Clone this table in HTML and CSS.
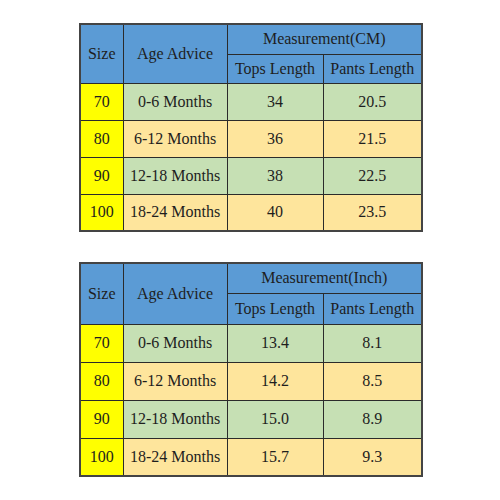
FILE: index.html
```html
<!DOCTYPE html>
<html>
<head>
<meta charset="utf-8">
<link rel="stylesheet" href="styles.css">
</head>
<body>
<div class="page">
  <table class="chart chart-cm">
    <colgroup><col class="c-size"><col class="c-age"><col class="c-tops"><col class="c-pants"></colgroup>
    <tr class="h1"><th rowspan="2">Size</th><th rowspan="2">Age Advice</th><th colspan="2">Measurement(CM)</th></tr>
    <tr class="h2"><th>Tops Length</th><th>Pants Length</th></tr>
    <tr class="green"><td class="size">70</td><td>0-6 Months</td><td>34</td><td>20.5</td></tr>
    <tr class="orange"><td class="size">80</td><td>6-12 Months</td><td>36</td><td>21.5</td></tr>
    <tr class="green"><td class="size">90</td><td>12-18 Months</td><td>38</td><td>22.5</td></tr>
    <tr class="orange"><td class="size">100</td><td>18-24 Months</td><td>40</td><td>23.5</td></tr>
  </table>
  <table class="chart chart-inch">
    <colgroup><col class="c-size"><col class="c-age"><col class="c-tops"><col class="c-pants"></colgroup>
    <tr class="h1"><th rowspan="2">Size</th><th rowspan="2">Age Advice</th><th colspan="2">Measurement(Inch)</th></tr>
    <tr class="h2"><th>Tops Length</th><th>Pants Length</th></tr>
    <tr class="green"><td class="size">70</td><td>0-6 Months</td><td>13.4</td><td>8.1</td></tr>
    <tr class="orange"><td class="size">80</td><td>6-12 Months</td><td>14.2</td><td>8.5</td></tr>
    <tr class="green"><td class="size">90</td><td>12-18 Months</td><td>15.0</td><td>8.9</td></tr>
    <tr class="orange"><td class="size">100</td><td>18-24 Months</td><td>15.7</td><td>9.3</td></tr>
  </table>
</div>
</body>
</html>
```
FILE: styles.css
```css
html, body { margin: 0; padding: 0; background: #ffffff; }
.page {
  width: 500px;
  height: 500px;
  padding: 23px 0 0 79px;
  box-sizing: border-box;
  display: flex;
  flex-direction: column;
  gap: 30px;
  font-family: "Liberation Serif", "Times New Roman", serif;
}
.chart {
  border-collapse: collapse;
  table-layout: fixed;
  width: 342px;
  font-family: "Liberation Serif", "Times New Roman", serif;
  font-size: 16px;
  color: #1e1e1e;
  border: 2px solid #444444;
}
.c-size { width: 43px; }
.c-age { width: 104px; }
.c-tops { width: 96px; }
.c-pants { width: 99px; }
.chart th, .chart td {
  border: 1px solid #2b2b2b;
  text-align: center;
  vertical-align: middle;
  padding: 0;
  font-weight: normal;
  white-space: nowrap;
}
.chart th { background: #5b9bd5; }
.h1 { height: 30px; }
.h2 { height: 29px; }
.chart tr.green, .chart tr.orange { height: 37px; }
.chart-inch tr.green, .chart-inch tr.orange { height: 38px; }
.chart-inch .h2 { height: 31px; }
.green td { background: #c6e0b4; }
.orange td { background: #fee59c; }
.chart td.size { background: #ffff00; }
```
